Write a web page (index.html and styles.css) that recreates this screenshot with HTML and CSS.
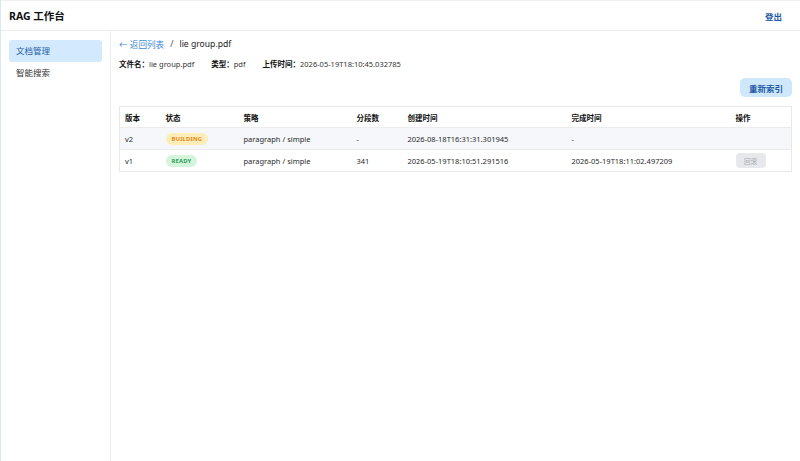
FILE: index.html
```html
<!DOCTYPE html>
<html lang="zh-CN">
<head>
    <meta charset="UTF-8">
    <meta name="viewport" content="width=device-width, initial-scale=1.0">
    <title>RAG 工作台</title>
    <link rel="stylesheet" href="styles.css">
</head>
<body>
    <header class="topbar">
        <div class="brand">RAG 工作台</div>
        <a class="logout" href="#">登出</a>
    </header>
    <div class="layout">
        <nav class="sidebar">
            <a class="nav-item active" href="#">文档管理</a>
            <a class="nav-item" href="#">智能搜索</a>
        </nav>
        <main class="content">
            <div class="crumbs">
                <a class="back" href="#">← 返回列表</a>
                <span class="sep">/</span>
                <span class="doc-name">lie group.pdf</span>
            </div>
            <div class="meta">
                <span><b>文件名：</b>lie group.pdf</span>
                <span><b>类型：</b>pdf</span>
                <span><b>上传时间：</b>2026-05-19T18:10:45.032785</span>
            </div>
            <div class="actions">
                <button class="btn-primary">重新索引</button>
            </div>
            <table class="versions">
                <thead>
                    <tr>
                        <th class="c-ver">版本</th>
                        <th class="c-status">状态</th>
                        <th class="c-strategy">策略</th>
                        <th class="c-chunks">分段数</th>
                        <th class="c-created">创建时间</th>
                        <th class="c-done">完成时间</th>
                        <th class="c-op">操作</th>
                    </tr>
                </thead>
                <tbody>
                    <tr class="current">
                        <td>v2</td>
                        <td><span class="badge building">BUILDING</span></td>
                        <td>paragraph / simple</td>
                        <td>-</td>
                        <td>2026-08-18T16:31:31.301945</td>
                        <td>-</td>
                        <td></td>
                    </tr>
                    <tr>
                        <td>v1</td>
                        <td><span class="badge ready">READY</span></td>
                        <td>paragraph / simple</td>
                        <td>341</td>
                        <td>2026-05-19T18:10:51.291516</td>
                        <td>2026-05-19T18:11:02.497209</td>
                        <td><button class="btn-small" disabled>回滚</button></td>
                    </tr>
                </tbody>
            </table>
        </main>
    </div>
</body>
</html>
```
FILE: styles.css
```css
* {
    box-sizing: border-box;
}
html, body {
    height: 100%;
}
body {
    margin: 0;
    font-family: "Noto Sans", "Noto Sans CJK SC", sans-serif;
    font-size: 7.5px;
    color: #222;
    background: #fff;
    border-left: 1px solid #dfe6f3;
    display: flex;
    flex-direction: column;
}
a {
    text-decoration: none;
}
.topbar {
    height: 31px;
    flex-shrink: 0;
    display: flex;
    align-items: center;
    justify-content: space-between;
    padding: 0 18px 0 8px;
    border-bottom: 1px solid #ececec;
    border-top: 1px solid #f0f0f0;
}
.brand {
    font-size: 10.5px;
    font-weight: 700;
    color: #111;
}
.logout {
    color: #1d5aa6;
    font-size: 8.5px;
    font-weight: 700;
}
.layout {
    flex: 1;
    display: flex;
}
.sidebar {
    width: 110px;
    flex-shrink: 0;
    border-right: 1px solid #ececec;
    padding: 9px 8px;
    display: flex;
    flex-direction: column;
}
.nav-item {
    display: block;
    height: 22px;
    line-height: 22px;
    padding: 0 7px;
    border-radius: 3px;
    color: #333;
    font-size: 8.5px;
}
.nav-item.active {
    background: #d3e9fd;
    color: #2361a8;
}
.content {
    flex: 1;
    padding: 5px 8px 0 8px;
}
.crumbs {
    font-size: 8.6px;
    height: 16px;
    display: flex;
    align-items: center;
    gap: 6px;
}
.back {
    color: #3d8ad6;
}
.sep {
    color: #555;
}
.doc-name {
    color: #222;
}
.meta {
    margin-top: 6px;
    display: flex;
    gap: 17px;
    color: #333;
}
.meta b {
    color: #111;
}
.actions {
    display: flex;
    justify-content: flex-end;
    margin-top: 9px;
}
.btn-primary {
    font-family: inherit;
    font-size: 8.5px;
    font-weight: 700;
    color: #1d5aa6;
    background: #cfe7fb;
    border: none;
    border-radius: 5px;
    height: 19px;
    width: 52px;
    padding: 0;
}
.versions {
    width: 100%;
    margin-top: 9px;
    border-collapse: collapse;
    border: 1px solid #e8e8e8;
}
.versions th {
    text-align: left;
    font-weight: 700;
    color: #111;
    height: 21px;
    padding: 0 5px;
}
.versions td {
    height: 22px;
    padding: 0 5px;
    color: #2a2a2a;
    border-top: 1px solid #ececec;
}
.versions tr.current td {
    background: #f5f7fa;
}
.c-ver { width: 41px; }
.c-status { width: 78px; }
.c-strategy { width: 113px; }
.c-chunks { width: 51px; }
.c-created { width: 164px; }
.c-done { width: 164px; }
.badge {
    display: inline-block;
    font-size: 5.8px;
    font-weight: 700;
    letter-spacing: 0.2px;
    height: 12px;
    line-height: 12px;
    padding: 0 6px;
    border-radius: 6px;
}
.badge.building {
    background: #fdedb8;
    color: #e3891c;
}
.badge.ready {
    background: #d4f5dc;
    color: #2f9d55;
}
.btn-small {
    font-family: inherit;
    font-size: 6.5px;
    color: #a9acb1;
    background: #e6e8eb;
    border: none;
    border-radius: 4px;
    height: 15px;
    width: 30px;
    padding: 0;
}
```
